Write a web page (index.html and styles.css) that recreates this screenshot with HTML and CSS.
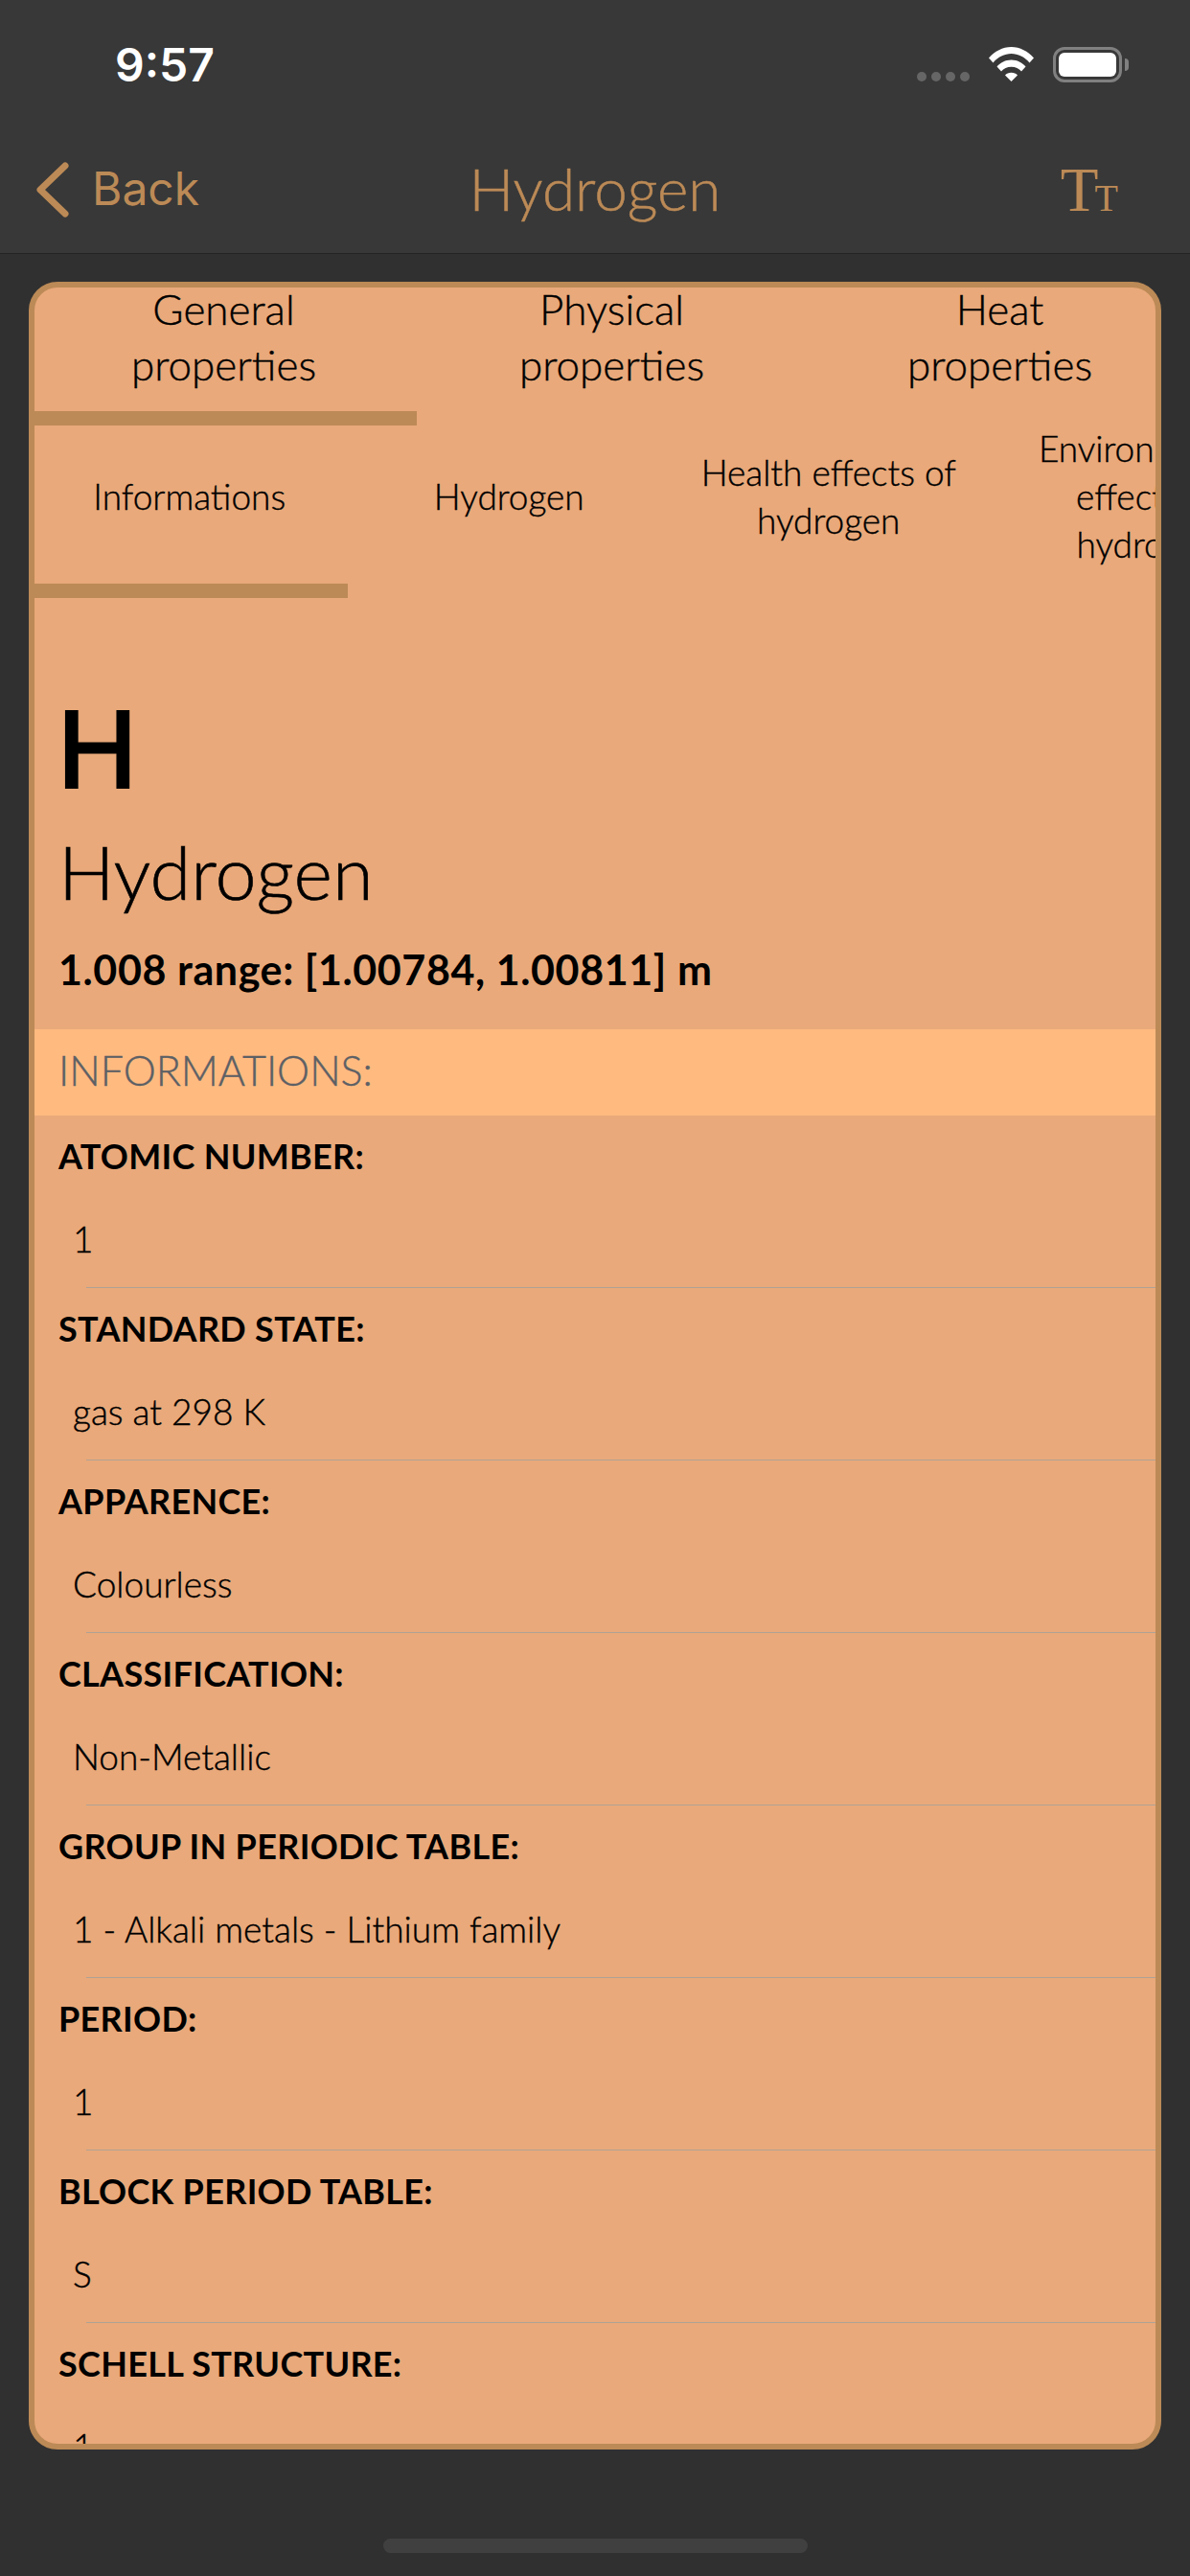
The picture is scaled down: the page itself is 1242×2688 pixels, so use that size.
FILE: index.html
```html
<!DOCTYPE html>
<html lang="en">
<head>
  <meta charset="UTF-8" />
  <title>Hydrogen</title>
  <link rel="stylesheet" href="styles.css">
</head>
<body>

  <!-- Status bar + navigation -->
  <header class="top-bar">
    <div class="status-bar">
      <span class="time">9:57</span>
      <div class="status-icons">
        <div class="signal"><i></i><i></i><i></i><i></i></div>
        <svg class="wifi" width="47" height="36" viewBox="0 0 47 36">
          <path d="M0 11.5C6 4.5 14.500 0 23.500 0S41 4.500 47 11.500L42.500 16.500C37.500 10.500 30.500 7 23.500 7S9.500 10.500 4.500 16.500Z" fill="#fff"/>
          <path d="M8.500 20.500C12 16.300 17.500 13.500 23.500 13.500S35 16.300 38.500 20.500L34 25.500C31.500 22.500 27.800 20.700 23.500 20.700S15.500 22.500 13 25.500Z" fill="#fff"/>
          <path d="M17 29.500C18.500 27.800 20.800 26.800 23.500 26.800S28.500 27.800 30 29.500L23.500 36Z" fill="#fff"/>
        </svg>
        <div class="battery"><div class="battery-fill"></div></div>
        <div class="battery-cap"></div>
      </div>
    </div>
    <nav class="nav-bar">
      <a class="back" href="#">
        <svg width="34" height="58" viewBox="0 0 34 58">
          <path d="M30 4L4 29L30 54" fill="none" stroke="#bc8a56" stroke-width="7" stroke-linecap="round" stroke-linejoin="round"/>
        </svg>
        <span class="back-text">Back</span>
      </a>
      <h1 class="nav-title">Hydrogen</h1>
      <div class="text-size"><span class="t-big">T</span><span class="t-small">T</span></div>
    </nav>
  </header>

  <main class="card">
    <div class="tabs">
      <div class="tab">General properties</div>
      <div class="tab">Physical properties</div>
      <div class="tab">Heat properties</div>
    </div>
    <div class="tab-line"></div>

    <div class="subtabs">
      <div class="subtab">Informations</div>
      <div class="subtab">Hydrogen</div>
      <div class="subtab">Health effects of hydrogen</div>
      <div class="subtab">Environmental effects of hydrogen</div>
    </div>
    <div class="subtab-line"></div>

    <section class="element">
      <div class="symbol">H</div>
      <div class="name">Hydrogen</div>
      <div class="mass">1.008 range: [1.00784, 1.00811] m</div>
    </section>

    <div class="band">INFORMATIONS:</div>

    <div class="row">
      <div class="label">ATOMIC NUMBER:</div>
      <div class="value">1</div>
    </div>
    <div class="row">
      <div class="label">STANDARD STATE:</div>
      <div class="value">gas at 298 K</div>
    </div>
    <div class="row">
      <div class="label">APPARENCE:</div>
      <div class="value">Colourless</div>
    </div>
    <div class="row">
      <div class="label">CLASSIFICATION:</div>
      <div class="value">Non-Metallic</div>
    </div>
    <div class="row">
      <div class="label">GROUP IN PERIODIC TABLE:</div>
      <div class="value">1 - Alkali metals - Lithium family</div>
    </div>
    <div class="row">
      <div class="label">PERIOD:</div>
      <div class="value">1</div>
    </div>
    <div class="row">
      <div class="label">BLOCK PERIOD TABLE:</div>
      <div class="value">S</div>
    </div>
    <div class="row">
      <div class="label">SCHELL STRUCTURE:</div>
      <div class="value">1</div>
    </div>
  </main>

  <div class="home-bar"></div>

</body>
</html>
```

FILE: styles.css
```css
html, body {
  margin: 0;
  padding: 0;
}
body {
  width: 1242px;
  height: 2688px;
  overflow: hidden;
  background-color: #303030;
  font-family: Lato, "Noto Sans", sans-serif;
  color: #000;
}

/* top */
.top-bar {
  height: 264px;
  background-color: #383838;
  border-bottom: 1px solid #232323;
}
.status-bar {
  height: 132px;
  display: flex;
  justify-content: space-between;
  padding: 0 64px 0 120px;
}
.time {
  font-family: Inter, sans-serif;
  font-size: 48px;
  font-weight: 600;
  line-height: 136px;
  color: #fff;
}
.status-icons {
  display: flex;
  align-items: flex-start;
  padding-top: 49px;
}
.signal {
  display: flex;
  gap: 5px;
  margin-top: 26px;
  margin-right: 20px;
}
.signal i {
  width: 10px;
  height: 10px;
  border-radius: 50%;
  background-color: #666;
}
.wifi {
  margin-right: 20px;
}
.battery {
  box-sizing: border-box;
  width: 72px;
  height: 37px;
  padding: 3px;
  border: 3px solid #808080;
  border-radius: 12px;
}
.battery-fill {
  height: 100%;
  background-color: #fff;
  border-radius: 6px;
}
.battery-cap {
  width: 4px;
  height: 13px;
  margin: 12px 0 0 3px;
  background-color: #808080;
  border-radius: 0 6px 6px 0;
}

.nav-bar {
  display: grid;
  grid-template-columns: 1fr auto 1fr;
  align-items: center;
  height: 132px;
  padding: 0 75px 0 38px;
}
.back {
  display: flex;
  align-items: center;
  gap: 24px;
  color: #bc8a56;
  text-decoration: none;
  font-family: Inter, sans-serif;
  font-size: 48px;
  font-weight: 400;
}
.back-text {
  margin-bottom: 3px;
}
.nav-title {
  margin: 0 0 4px 37px;
  font-size: 62px;
  font-weight: 300;
  -webkit-text-stroke: 0.500px #bc8a56;
  color: #bc8a56;
}
.text-size {
  justify-self: end;
  display: flex;
  align-items: baseline;
  font-family: "Liberation Serif", serif;
  color: #bc8a56;
}
.t-big {
  font-size: 65px;
}
.t-small {
  font-size: 40px;
  margin-left: -4px;
}

/* card */
.card {
  box-sizing: border-box;
  height: 2262px;
  margin: 29px 30px 0;
  background-color: #e9a97a;
  border: solid #bc8a56;
  border-width: 6px;
  border-radius: 30px;
  overflow: hidden;
}
.tabs {
  display: flex;
  height: 136px;
  margin: -7px 0 0 -5px;
}
.tab {
  flex: 0 0 405px;
  box-sizing: border-box;
  padding: 0 100px;
  text-align: center;
  font-size: 44px;
  font-weight: 300;
  -webkit-text-stroke: 0.400px #000;
  line-height: 58px;
}
.tab-line {
  width: 399px;
  height: 15px;
  background-color: #bc8a56;
}
.subtabs {
  display: flex;
  align-items: center;
  height: 165px;
  padding-bottom: 17px;
  box-sizing: border-box;
  margin-left: -5px;
}
.subtab {
  flex: 0 0 333.500px;
  box-sizing: border-box;
  padding: 0 30px;
  text-align: center;
  font-size: 37px;
  font-weight: 300;
  -webkit-text-stroke: 0.400px #000;
  line-height: 50px;
}
.subtab-line {
  width: 327px;
  height: 15px;
  background-color: #bc8a56;
}

.element {
  height: 450px;
  padding-left: 26px;
}
.symbol {
  margin-left: -2px;
  padding-top: 88px;
  font-family: "Liberation Sans", sans-serif;
  font-size: 115px;
  font-weight: 400;
  -webkit-text-stroke: 3px #000;
  line-height: 140px;
}
.name {
  margin: 13px 0 0 -1px;
  font-size: 77.500px;
  font-weight: 300;
  -webkit-text-stroke: 0.600px #000;
  line-height: 90px;
}
.mass {
  margin: 27px 0 0 -1px;
  font-size: 43px;
  font-weight: 700;
  letter-spacing: 0.600px;
  line-height: 60px;
}
.band {
  height: 90px;
  padding-left: 25px;
  background-color: #ffba80;
  color: #5c6065;
  font-size: 43px;
  font-weight: 300;
  -webkit-text-stroke: 0.400px #5c6065;
  line-height: 86px;
}
.row {
  position: relative;
  height: 180px;
}
.row::after {
  content: "";
  position: absolute;
  left: 54px;
  right: 0;
  bottom: 0;
  height: 1px;
  background-color: #b0a294;
}
.label {
  padding: 20px 0 0 25px;
  font-size: 36px;
  font-weight: 700;
  letter-spacing: 0.300px;
  line-height: 44px;
}
.value {
  padding: 43px 0 0 40px;
  font-size: 37px;
  font-weight: 300;
  -webkit-text-stroke: 0.400px #000;
  line-height: 44px;
}

.home-bar {
  width: 443px;
  height: 15px;
  margin: 93px auto 0;
  background-color: #404040;
  border-radius: 8px;
}
```
